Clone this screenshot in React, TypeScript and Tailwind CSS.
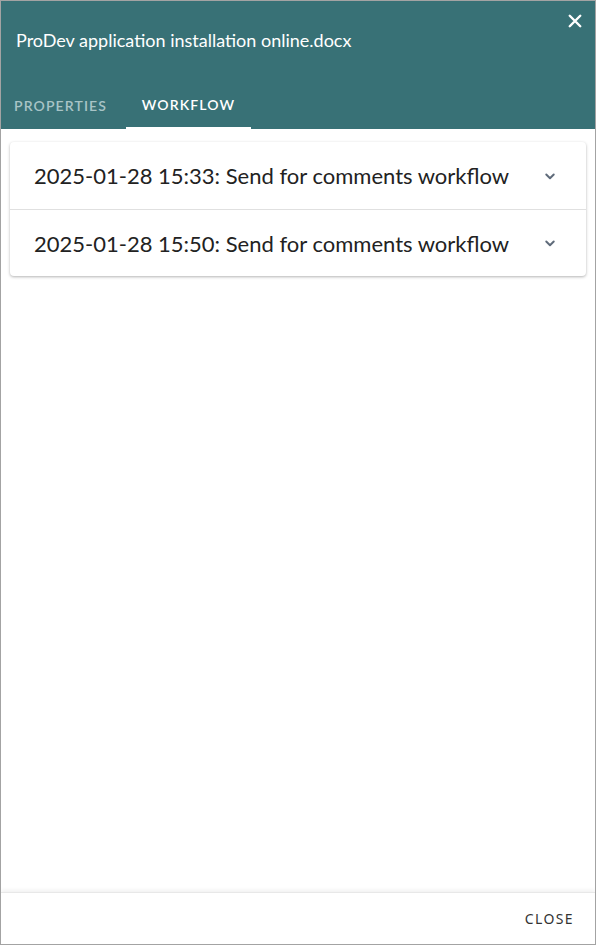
import React from "react";

function Chevron() {
  return (
    <svg width="18" height="18" viewBox="0 0 24 24" fill="none" stroke="#5f6b7a" strokeWidth="2.6" strokeLinecap="round" strokeLinejoin="round">
      <path d="M7 10l5 5 5-5" />
    </svg>
  );
}

export default function App() {
  const items = ["2025-01-28 15:33: Send for comments workflow", "2025-01-28 15:50: Send for comments workflow"];
  return (
    <div className="w-[596px] h-[945px] border border-[#a3a3a3] flex flex-col bg-white overflow-hidden" style={{ fontFamily: "Lato, 'Noto Sans', sans-serif" }}>
      <div className="bg-[#387176] h-[128px] flex flex-col shrink-0">
        <div className="flex justify-between pl-[15px] pr-[11px] pt-[26px]">
          <div className="text-white text-[18px] leading-[26px] font-normal">ProDev application installation online.docx</div>
          <svg className="-mt-[15px]" width="18" height="18" viewBox="0 0 24 24" fill="none" stroke="white" strokeWidth="3.2" strokeLinecap="round">
            <path d="M5 5l14 14M19 5L5 19" />
          </svg>
        </div>
        <div className="flex mt-auto">
          <div className="w-[125px] h-[48px] flex items-center pl-[13px] text-[14px] font-semibold tracking-[0.08em] text-[#a8c4c6]">PROPERTIES</div>
          <div className="w-[125px] h-[48px] flex flex-col">
            <div className="flex-1 flex items-center justify-center text-[14px] font-semibold tracking-[0.08em] text-white">WORKFLOW</div>
            <div className="h-[2px] bg-white" />
          </div>
        </div>
      </div>
      <div className="flex-1 px-[9px] pt-[13px]">
        <div className="rounded bg-white shadow-[0_1px_3px_rgba(0,0,0,0.3)]">
          {items.map((t, i) => (
            <div key={i} className={`h-[67px] flex items-center justify-between pl-[24px] pr-[27px] ${i > 0 ? "border-t border-[#e0e0e0]" : ""}`}>
              <span className="text-[22px] text-[#222]">{t}</span>
              <Chevron />
            </div>
          ))}
        </div>
      </div>
      <div className="h-[52px] shrink-0 border-t border-[#e8e8e8] shadow-[0_-2px_4px_rgba(0,0,0,0.06)] flex items-center justify-end pr-[21px]">
        <span className="text-[14px] tracking-[0.1em] text-[#333]" style={{ fontFamily: "'Noto Sans', sans-serif" }}>CLOSE</span>
      </div>
    </div>
  );
}
